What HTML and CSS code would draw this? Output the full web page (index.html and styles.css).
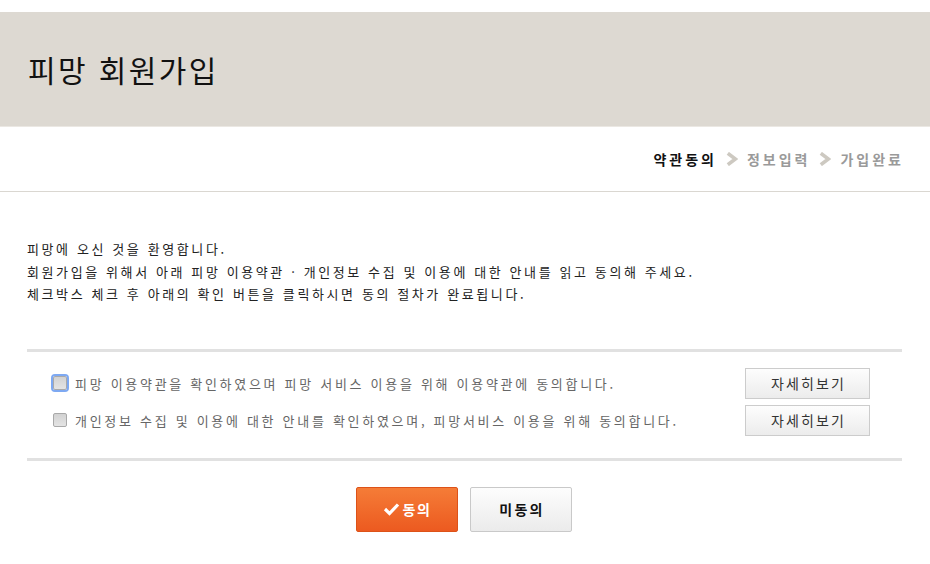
FILE: index.html
```html
<!DOCTYPE html>
<html lang="ko">
<head>
<meta charset="utf-8">
<title>피망 회원가입</title>
<link rel="stylesheet" href="styles.css">
</head>
<body>
<div class="top-strip"></div>
<header class="header">
  <h1 class="title">피망 회원가입</h1>
</header>
<nav class="steps">
  <span class="step active">약관동의</span>
  <svg class="chev" width="12" height="14" viewBox="0 0 12 14"><path d="M1.8 1.3 L9.4 7 L1.8 12.7" fill="none" stroke="#cdc9c1" stroke-width="3.6"/></svg>
  <span class="step">정보입력</span>
  <svg class="chev" width="12" height="14" viewBox="0 0 12 14"><path d="M1.8 1.3 L9.4 7 L1.8 12.7" fill="none" stroke="#cdc9c1" stroke-width="3.6"/></svg>
  <span class="step">가입완료</span>
</nav>
<section class="intro">
  <p>피망에 오신 것을 환영합니다.</p>
  <p>회원가입을 위해서 아래 피망 이용약관 · 개인정보 수집 및 이용에 대한 안내를 읽고 동의해 주세요.</p>
  <p>체크박스 체크 후 아래의 확인 버튼을 클릭하시면 동의 절차가 완료됩니다.</p>
</section>
<section class="agree-box">
  <div class="agree-row">
    <label class="agree-label"><span class="cb focused"></span>피망 이용약관을 확인하였으며 피망 서비스 이용을 위해 이용약관에 동의합니다.</label>
    <button class="detail-btn">자세히보기</button>
  </div>
  <div class="agree-row">
    <label class="agree-label"><span class="cb"></span>개인정보 수집 및 이용에 대한 안내를 확인하였으며, 피망서비스 이용을 위해 동의합니다.</label>
    <button class="detail-btn">자세히보기</button>
  </div>
</section>
<div class="actions">
  <button class="btn btn-agree"><svg width="17" height="14" viewBox="0 0 17 14"><path d="M2 7 L6.5 11.5 L15 2.5" fill="none" stroke="#fff" stroke-width="3.2"/></svg>동의</button>
  <button class="btn btn-disagree">미동의</button>
</div>
</body>
</html>
```
FILE: styles.css
```css
* { box-sizing: border-box; }
body {
  margin: 0;
  background: #fff;
  font-family: "Noto Sans CJK KR", "Noto Sans", sans-serif;
  color: #222;
}
.top-strip { height: 12px; background: #fff; }
.header {
  height: 115px;
  background: #ddd9d2;
  border-bottom: 1px solid #ebe8e3;
  display: flex;
  align-items: center;
  padding-left: 28px;
}
.title {
  margin: 0;
  font-size: 30px;
  font-weight: 400;
  color: #111;
  letter-spacing: 2.4px;
}
.steps {
  height: 65px;
  border-bottom: 1px solid #dad7d1;
  display: flex;
  justify-content: flex-end;
  align-items: center;
  padding-right: 26px;
  gap: 9px;
}
.step {
  font-size: 14px;
  font-weight: 700;
  color: #9a9a9a;
  letter-spacing: 3px;
}
.step.active { color: #111; }
.chev { display: block; }
.intro {
  padding: 46px 27px 0;
}
.intro p {
  margin: 0;
  font-size: 13px;
  line-height: 22.5px;
  color: #222;
  letter-spacing: 2.6px;
}
.agree-box {
  margin: 43px 28px 0 27px;
  border-top: 3px solid #e1e1e1;
  border-bottom: 3px solid #e1e1e1;
  padding: 16px 32px 22px 26px;
  display: flex;
  flex-direction: column;
  gap: 6px;
}
.agree-row {
  display: flex;
  align-items: center;
  justify-content: space-between;
  height: 31px;
}
.agree-label {
  display: flex;
  align-items: center;
  gap: 8px;
  font-size: 13px;
  color: #666;
  letter-spacing: 2.7px;
}
.cb {
  width: 14px;
  height: 14px;
  border: 1px solid #a9a9a9;
  border-radius: 2px;
  background: linear-gradient(#d2d2d2, #e4e4e4);
}
.cb.focused {
  outline: 2px solid #7ea9f2;
  outline-offset: 0;
}
.detail-btn {
  width: 125px;
  height: 31px;
  border: 1px solid #cccccc;
  background: linear-gradient(#fdfdfd, #ececec);
  font-family: inherit;
  font-size: 14px;
  color: #333;
  letter-spacing: 2.1px;
  padding: 0 0 0 2px;
}
.actions {
  display: flex;
  justify-content: center;
  gap: 12px;
  margin-top: 26px;
  padding-right: 2px;
}
.btn {
  width: 102px;
  height: 45px;
  font-family: inherit;
  font-size: 14px;
  font-weight: 700;
  display: flex;
  align-items: center;
  justify-content: center;
  gap: 3px;
  padding: 0;
  border-radius: 2px;
  letter-spacing: 1.5px;
}
.btn-agree {
  background: linear-gradient(#f57c37, #ec5a20);
  border: 1px solid #dd5218;
  color: #fff;
}
.btn-disagree {
  background: linear-gradient(#fdfdfd, #ebebeb);
  border: 1px solid #c9c9c9;
  color: #111;
  letter-spacing: 2.3px;
  padding-left: 2px;
}
```
